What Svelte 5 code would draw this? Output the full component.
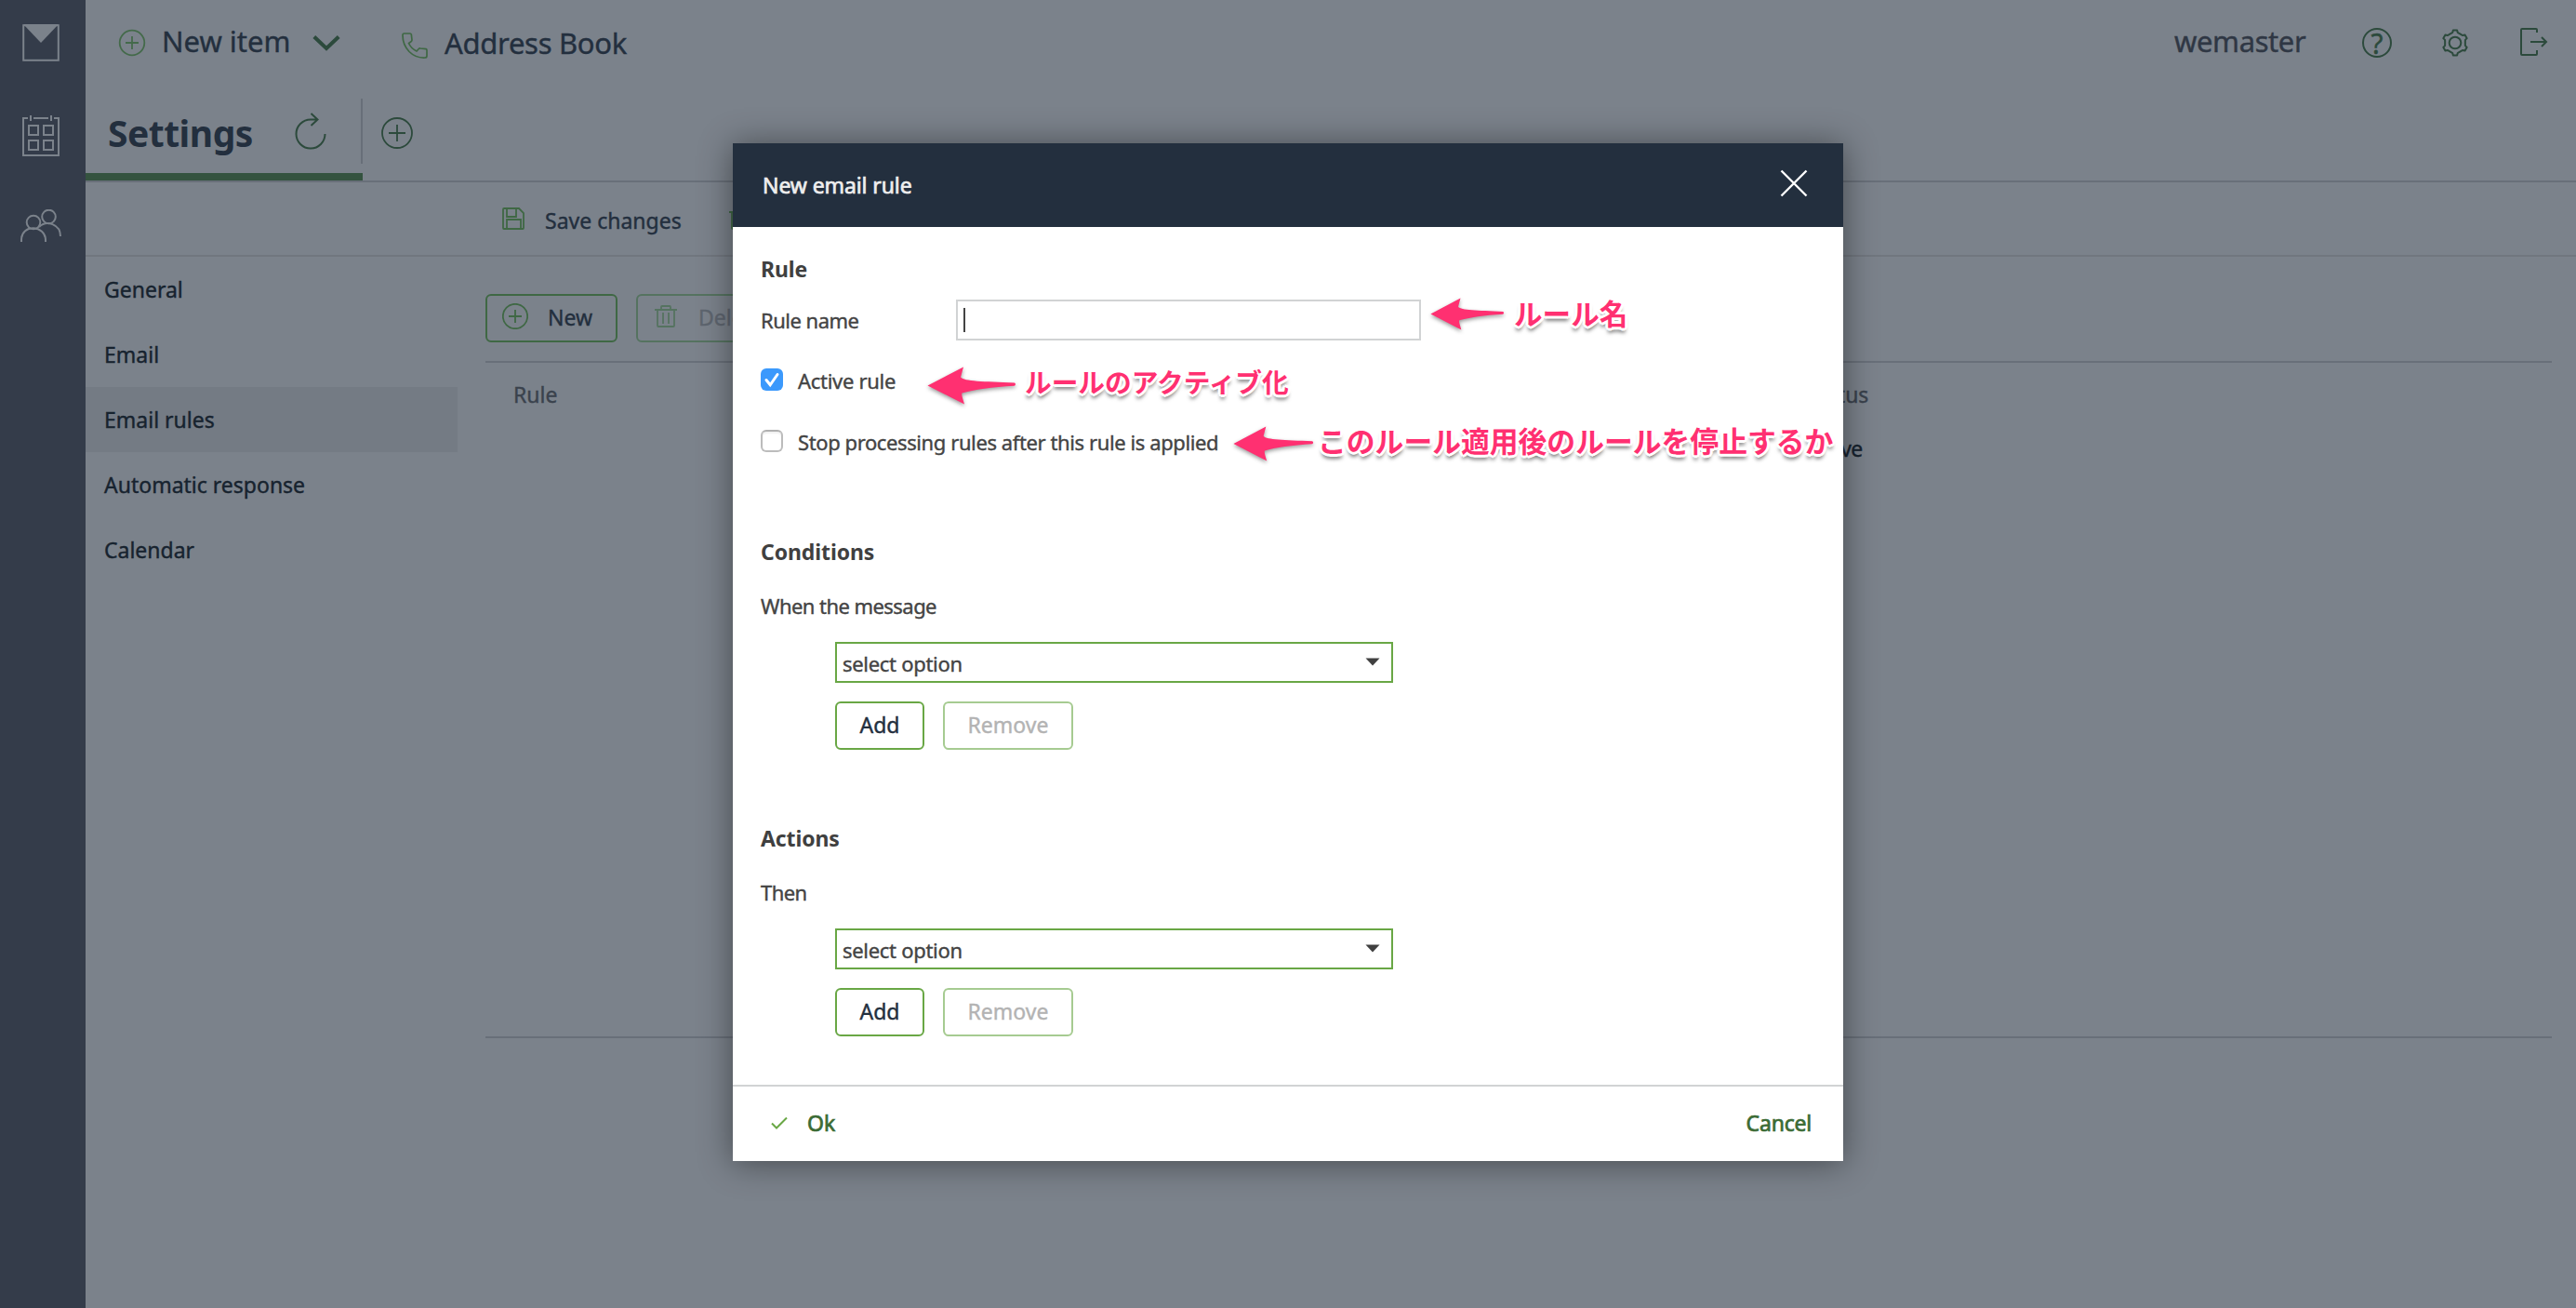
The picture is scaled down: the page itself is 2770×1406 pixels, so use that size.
<script>
  const menu = ['General', 'Email', 'Email rules', 'Automatic response', 'Calendar'];
  let active = $state('Email rules');
  let activeRule = $state(true);
  let stopProcessing = $state(false);

  const sections = [
    { title: 'Conditions', label: 'When the message' },
    { title: 'Actions', label: 'Then' }
  ];

  const notes = [
    { name: 'note-name', text: 'ルール名' },
    { name: 'note-active', text: 'ルールのアクティブ化' },
    { name: 'note-stop', text: 'このルール適用後のルールを停止するか' }
  ];

  // six-toothed gear outline
  function gear(cx, cy) {
    const pts = [];
    for (let i = 0; i < 6; i++) {
      const mid = -90 + i * 60;
      for (const [da, r] of [[-21, 11], [-14, 11.4], [-9, 13.6], [9, 13.6], [14, 11.4], [21, 11]]) {
        const a = ((mid + da) * Math.PI) / 180;
        pts.push(`${(cx + r * Math.cos(a)).toFixed(2)},${(cy + r * Math.sin(a)).toFixed(2)}`);
      }
    }
    return pts.join(' ');
  }
</script>

{#snippet plus(size, r, arm)}
  <svg class="icon" width={size} height={size} viewBox="{-size / 2} {-size / 2} {size} {size}">
    <circle r={r} />
    <path d="M{-arm} 0H{arm}M0 {-arm}V{arm}" />
  </svg>
{/snippet}

{#snippet trash()}
  <svg class="icon" width="24" height="24" viewBox="0 0 24 24">
    <path d="M0 5H24M3 5V22Q3 23 4 23H20Q21 23 21 22V5M7 5V2Q7 1 8 1H16Q17 1 17 2V5M9 8V20M15 8V20" />
  </svg>
{/snippet}

<div class="app">
  <nav class="rail">
    <svg class="mail" width="40" height="40" viewBox="0 0 40 40">
      <rect x="1.2" y="1.2" width="37.6" height="37.6" />
      <path d="M1 0H39L20 20Z" />
    </svg>
    <svg class="calendar" width="40" height="44" viewBox="0 0 40 44">
      <path d="M6 3H1V43H39V3H34M12 3H28M9 0V6M31 0V6" />
      <path d="M7 11H17V21H7ZM23 11H33V21H23ZM7 27H17V37H7ZM23 27H33V37H23Z" />
    </svg>
    <svg class="people" width="46" height="36" viewBox="0 0 46 36">
      <circle cx="15" cy="14" r="7.3" />
      <circle cx="31.5" cy="8" r="7.3" />
      <path d="M2 35V33C2 15 28 17 28 33V35M21 19C29 11 44 16 44 29" />
    </svg>
  </nav>

  <div class="main">
    <header class="topbar">
      <div class="new-icon">{@render plus(30, 13.3, 7)}</div>
      <span class="new-item">New item</span>
      <svg class="chevron" width="30" height="18" viewBox="0 0 30 18"><path d="M1.8 2.5L15 15L28.2 2.5" /></svg>
      <svg class="phone" width="28" height="28" viewBox="0 0 28 28">
        <path d="M2.5 1H9Q10 1 10.3 2L11 8Q11 9 10 9.7L7.5 11.5Q10 17 16 20L18.3 17.5Q19 16.8 20 17L26 17.6Q27 18 27 19V25Q27 27 25 27Q15 27.500 8 20.500Q1 13 1 3Q1 1 2.500 1Z" />
      </svg>
      <span class="address">Address Book</span>
      <span class="user">wemaster</span>
      <div class="help">?</div>
      <svg class="cog" width="30" height="30" viewBox="0 0 30 30">
        <polygon points={gear(15, 15)} />
        <circle cx="15" cy="15" r="6.3" />
      </svg>
      <svg class="logout" width="30" height="30" viewBox="0 0 30 30">
        <path d="M18 5V2Q18 1 17 1H2Q1 1 1 2V28Q1 29 2 29H17Q18 29 18 28V24M11 15H28M23 10L28 15L23 20" />
      </svg>
    </header>

    <div class="tabs">
      <div class="tab">
        <h1>Settings</h1>
        <svg class="refresh" width="34" height="40" viewBox="0 0 34 40">
          <path d="M32.500 23A15.500 15.500 0 1 1 17 7.500H24M17.500 1L24.500 7.500L17.500 14" />
        </svg>
        <div class="divider"></div>
      </div>
      <div class="add-tab">{@render plus(34, 16, 9)}</div>
    </div>

    <div class="toolbar">
      <svg class="icon" width="24" height="24" viewBox="0 0 24 24">
        <path d="M1 2Q1 1 2 1H18L23 6V22Q23 23 22 23H2Q1 23 1 22ZM5 1V10H15V1M5 23V13H20V23" />
      </svg>
      <span class="save">Save changes</span>
      {@render trash()}
    </div>

    <div class="workspace">
      <ul class="menu">
        {#each menu as item}
          <li class:selected={item === active} onclick={() => (active = item)}>{item}</li>
        {/each}
      </ul>
      <div class="rules">
        <div class="actions">
          <div class="btn new">{@render plus(28, 13.2, 7)}<span>New</span></div>
          <div class="btn delete">{@render trash()}<span>Delete</span></div>
        </div>
        <div class="table">
          <div class="tr th"><span>Rule</span><span class="status">Status</span></div>
          <div class="tr"><span></span><span class="status value">Active</span></div>
        </div>
      </div>
    </div>
  </div>

  <div class="modal">
    <div class="modal-head">
      <span>New email rule</span>
      <svg width="30" height="30" viewBox="0 0 30 30"><path d="M1.500 1.500L28.500 28.500M28.500 1.500L1.500 28.500" /></svg>
    </div>

    <div class="modal-body">
      <h3>Rule</h3>
      <div class="field">
        <span>Rule name</span>
        <div class="input"><i class="caret"></i></div>
      </div>
      <div class="check" onclick={() => (activeRule = !activeRule)}>
        <div class="box" class:checked={activeRule}>
          {#if activeRule}
            <svg width="24" height="24" viewBox="0 0 24 24"><path d="M6 12.500L10.200 17.800L18 6.500" /></svg>
          {/if}
        </div>
        <span class="active-text">Active rule</span>
      </div>
      <div class="check second" onclick={() => (stopProcessing = !stopProcessing)}>
        <div class="box" class:checked={stopProcessing}></div>
        <span>Stop processing rules after this rule is applied</span>
      </div>

      {#each sections as s}
        <section>
          <h3>{s.title}</h3>
          <p>{s.label}</p>
          <div class="select">
            <span>select option</span>
            <svg width="16" height="9" viewBox="0 0 16 9"><path d="M0.500 0.500H15.500L8 8.500Z" /></svg>
          </div>
          <div class="buttons">
            <div class="mbtn add">Add</div>
            <div class="mbtn remove">Remove</div>
          </div>
        </section>
      {/each}
    </div>

    <div class="modal-foot">
      <svg width="18" height="14" viewBox="0 0 18 14"><path d="M1 7.500L6 12.500L17 1.500" /></svg>
      <span class="ok">Ok</span>
      <span class="cancel">Cancel</span>
    </div>

    {#each notes as n}
      <div class="note {n.name}">
        <svg viewBox="0 0 96 41" preserveAspectRatio="none">
          <path d="M0.500 20.500L39 0.500L36 11.500C40 16 60 16 94 17.500Q96 19 94 20.800C70 22 50 25 37.500 28.500C36.500 30 38.500 35 40 40.500Z" />
        </svg>
        <span>{n.text}</span>
      </div>
    {/each}
  </div>
</div>

<style>
  :global(body) {
    margin: 0;
    overflow: hidden;
  }

  .app {
    position: relative;
    display: flex;
    width: 2770px;
    height: 1406px;
    background: #7b828b;
    color: #232f3e;
    font-family: 'Noto Sans', 'Open Sans', 'Noto Sans CJK JP', sans-serif;
    font-size: 23px;
    line-height: 28px;
    white-space: nowrap;
    overflow: hidden;
    -webkit-text-stroke-width: 0.4px;
  }

  svg {
    display: block;
    flex: none;
    fill: none;
    stroke-width: 2;
  }

  .icon {
    stroke: #3f6844;
    stroke-width: 1.8;
  }

  /* Left rail */
  .rail {
    display: flex;
    flex-direction: column;
    align-items: center;
    box-sizing: border-box;
    width: 92px;
    padding: 26px 4px 0 0;
    background: #343c4a;
    stroke: #7b828b;
  }

  .mail path {
    fill: #7b828b;
    stroke: none;
  }

  .calendar {
    margin-top: 58px;
  }

  .people {
    margin-top: 57px;
  }

  .main {
    flex: 1;
    display: flex;
    flex-direction: column;
  }

  /* Top bar */
  .topbar {
    display: flex;
    align-items: center;
    height: 92px;
    padding-left: 35px;
    font-size: 31px;
    line-height: 40px;
  }

  .new-icon {
    opacity: 0.9;
  }

  .new-item {
    width: 162px;
    margin: 0 0 5px 17px;
  }

  .chevron {
    stroke: #2c4a3c;
    stroke-width: 4;
  }

  .phone {
    margin: 5px 0 0 66px;
    stroke: #3f6844;
    stroke-width: 1.7;
  }

  .address {
    margin-left: 18px;
    letter-spacing: -0.3px;
  }

  .user {
    width: 141px;
    margin: 0 60px 5px auto;
    color: #2f3744;
    letter-spacing: -0.4px;
  }

  .cog,
  .logout {
    stroke: #2c4a3c;
  }

  .help {
    box-sizing: border-box;
    width: 32px;
    height: 32px;
    margin: 0 1px;
    border: 2px solid #2c4a3c;
    border-radius: 50%;
    color: #2c4a3c;
    font-size: 30px;
    line-height: 29px;
    text-align: center;
  }

  .cog {
    margin-left: 52px;
    stroke-linejoin: round;
  }

  .logout {
    margin: 0 30px 2px 55px;
  }

  /* Tabs */
  .tabs {
    display: flex;
    height: 102px;
    border-bottom: 2px solid #686f79;
  }

  .tab {
    display: flex;
    box-sizing: border-box;
    width: 298px;
    padding-left: 24px;
    border-bottom: 8px solid #34533f;
  }

  h1 {
    width: 201px;
    margin: 27px 0 0;
    font-size: 39px;
    line-height: 47px;
    letter-spacing: -0.5px;
  }

  .refresh {
    margin-top: 29px;
    stroke: #2c4a3c;
  }

  .divider {
    width: 2px;
    height: 70px;
    margin: 14px 0 0 auto;
    background: #686f79;
  }

  .add-tab {
    padding: 34px 0 0 20px;
  }

  .add-tab .icon,
  .add-tab :global(.icon) {
    stroke: #2c4a3c;
  }

  .toolbar {
    display: flex;
    align-items: center;
    box-sizing: border-box;
    height: 80px;
    padding-left: 448px;
    border-bottom: 2px solid #71777f;
  }

  .save {
    width: 198px;
    margin: 3px 0 0 22px;
  }

  .workspace {
    display: flex;
    height: 840px;
  }

  .menu {
    width: 400px;
    margin: 0 30px 0 0;
    padding: 0;
    list-style: none;
    color: #17232f;
  }

  .menu li {
    height: 70px;
    padding-left: 20px;
    line-height: 70px;
  }

  .menu .selected {
    background: #747b84;
  }

  .rules {
    display: flex;
    flex-direction: column;
    width: 2222px;
  }

  .actions {
    display: flex;
    gap: 20px;
    padding: 40px 0 20px;
  }

  .btn {
    display: flex;
    align-items: center;
    box-sizing: border-box;
    height: 52px;
    border: 2px solid #3f6844;
    border-radius: 6px;
  }

  .new {
    width: 142px;
    padding: 0 0 4px 16px;
  }

  .new span {
    margin: 2px 0 0 21px;
  }

  .delete {
    width: 160px;
    padding: 0 0 4px 18px;
    border-color: #557360;
    color: #5e656f;
  }

  .delete span {
    margin: 2px 0 0 23px;
  }

  .delete .icon,
  .delete :global(.icon) {
    stroke: #557360;
  }

  .table {
    flex: 1;
    box-sizing: border-box;
    border-top: 2px solid #686f79;
    border-bottom: 2px solid #686f79;
    padding-top: 5px;
  }

  .tr {
    display: flex;
    height: 58px;
    line-height: 58px;
    color: #17232f;
  }

  .tr span:first-child {
    width: 1390px;
    padding-left: 30px;
  }

  .th {
    color: #3a424d;
  }

  .value {
    letter-spacing: -0.7px;
  }

  /* Dialog */
  .modal {
    position: absolute;
    left: 788px;
    top: 154px;
    display: flex;
    flex-direction: column;
    width: 1194px;
    height: 1094px;
    background: #fff;
    color: #444;
    box-shadow: 0 2px 34px rgba(0, 0, 0, 0.45);
  }

  .modal-head {
    display: flex;
    justify-content: space-between;
    align-items: center;
    height: 90px;
    padding: 0 38px 0 32px;
    background: #232f3e;
    color: #eee;
    letter-spacing: -0.1px;
    -webkit-text-stroke-width: 0.7px;
  }

  .modal-head svg {
    margin-bottom: 4px;
    stroke: #fff;
    stroke-width: 2.4;
  }

  .modal-body {
    box-sizing: border-box;
    height: 922px;
    padding: 31px 30px 0;
    font-size: 22px;
    letter-spacing: -0.4px;
  }

  h1,
  h3 {
    -webkit-text-stroke-width: 0;
  }

  h3 {
    margin: 0;
    color: #404040;
    font-size: 23px;
    line-height: 28px;
    letter-spacing: -0.1px;
  }

  .field {
    display: flex;
    align-items: center;
    margin-top: 19px;
  }

  .field span {
    width: 210px;
    margin-bottom: 1px;
    letter-spacing: -0.5px;
  }

  .input {
    display: flex;
    align-items: center;
    box-sizing: border-box;
    width: 500px;
    height: 44px;
    padding-left: 6px;
    border: 2px solid #d1d3d4;
  }

  .caret {
    width: 2px;
    height: 26px;
    background: #444;
  }

  .check {
    display: flex;
    align-items: center;
    height: 24px;
    margin-top: 30px;
  }

  .check span {
    margin: 1px 0 0 16px;
  }

  .active-text {
    letter-spacing: -0.3px;
  }

  .second {
    margin-top: 42px;
  }

  .box {
    box-sizing: border-box;
    width: 24px;
    height: 24px;
    border: 2px solid #bcbcbc;
    border-top-color: #b0b0b0;
    border-radius: 6px;
    box-shadow: inset 0 2px 2px #f0f0f0;
  }

  .box.checked {
    border: none;
    background: #3b99fc;
    box-shadow: none;
  }

  .box svg {
    stroke: #fff;
    stroke-width: 3;
    stroke-linecap: round;
  }

  section {
    height: 215px;
    margin-top: 93px;
  }

  p {
    margin: 30px 0 25px;
    letter-spacing: -0.55px;
  }

  .select {
    display: flex;
    justify-content: space-between;
    align-items: center;
    box-sizing: border-box;
    width: 600px;
    height: 44px;
    margin-left: 80px;
    padding: 2px 12px 0 6px;
    border: 2px solid #69a745;
  }

  .select span {
    letter-spacing: -0.3px;
  }

  .select svg {
    margin-bottom: 4px;
    fill: #404040;
  }

  .buttons {
    display: flex;
    gap: 20px;
    margin: 20px 0 0 80px;
    color: #232f3e;
    font-size: 23px;
    letter-spacing: 0;
  }

  .mbtn {
    box-sizing: border-box;
    height: 52px;
    border: 2px solid #69a745;
    border-radius: 6px;
    line-height: 46px;
    text-align: center;
  }

  .add {
    width: 96px;
  }

  .remove {
    width: 140px;
    border-color: #a6cb91;
    color: #b3b3b3;
  }

  .modal-foot {
    display: flex;
    align-items: center;
    box-sizing: border-box;
    height: 82px;
    padding: 0 34px 2px 41px;
    border-top: 2px solid #d1d3d4;
    color: #3b6b35;
    -webkit-text-stroke-width: 0.7px;
  }

  .modal-foot svg {
    stroke: #69a745;
  }

  .ok {
    margin-left: 21px;
  }

  .cancel {
    margin-left: auto;
    letter-spacing: -0.2px;
  }

  /* Callouts drawn over the dialog */
  .note {
    position: absolute;
    display: flex;
    align-items: center;
    color: #ff3071;
    font-family: 'Noto Sans CJK JP', sans-serif;
    font-weight: 700;
    line-height: 44px;
    letter-spacing: 0;
    -webkit-text-stroke-width: 0;
  }

  .note svg {
    fill: #ff3071;
    filter: drop-shadow(0 2px 2px rgba(0, 0, 0, 0.4));
    overflow: visible;
  }

  .note span {
    text-shadow: 3px 0 #fff, -3px 0 #fff, 0 3px #fff, 0 -3px #fff, 2px 2px #fff, -2px 2px #fff,
      2px -2px #fff, -2px -2px #fff, 0 5px 4px rgba(0, 0, 0, 0.6);
  }

  .note-name {
    left: 750px;
    top: 160px;
    font-size: 30.6px;
  }

  .note-name svg {
    width: 80px;
    height: 35px;
    margin: 2px 10px 0 0;
  }

  .note-active {
    left: 209px;
    top: 231px;
    font-size: 28.7px;
  }

  .note-active svg {
    width: 96px;
    height: 41px;
    margin: 9px 9px 0 0;
  }

  .note-stop {
    left: 538px;
    top: 296px;
    font-size: 30.8px;
  }

  .note-stop svg {
    width: 87px;
    height: 38px;
    margin: 8px 4px 0 0;
  }
</style>
